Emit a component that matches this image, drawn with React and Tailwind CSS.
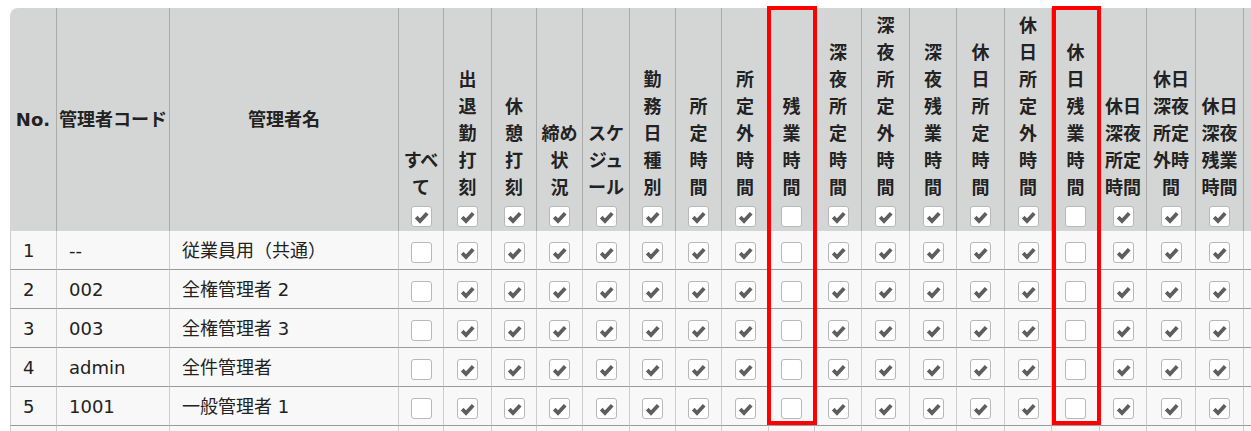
import React from 'react';

const columns = [
  { key: 'all', w: 'w-[45px]', lines: ['すべ', 'て'], head: true, body: false },
  { key: 'clock', w: 'w-[48px]', lines: ['出', '退', '勤', '打', '刻'], head: true, body: true },
  { key: 'break', w: 'w-[45px]', lines: ['休', '憩', '打', '刻'], head: true, body: true },
  { key: 'close', w: 'w-[46px]', lines: ['締め', '状', '況'], head: true, body: true },
  { key: 'sched', w: 'w-[47px]', lines: ['スケ', 'ジュ', 'ール'], head: true, body: true },
  { key: 'daytype', w: 'w-[46px]', lines: ['勤', '務', '日', '種', '別'], head: true, body: true },
  { key: 'reg', w: 'w-[46px]', lines: ['所', '定', '時', '間'], head: true, body: true },
  { key: 'nonreg', w: 'w-[47px]', lines: ['所', '定', '外', '時', '間'], head: true, body: true },
  { key: 'ot', w: 'w-[46px]', lines: ['残', '業', '時', '間'], head: false, body: false },
  { key: 'nreg', w: 'w-[47px]', lines: ['深', '夜', '所', '定', '時', '間'], head: true, body: true },
  { key: 'nnonreg', w: 'w-[48px]', lines: ['深', '夜', '所', '定', '外', '時', '間'], head: true, body: true },
  { key: 'not', w: 'w-[47px]', lines: ['深', '夜', '残', '業', '時', '間'], head: true, body: true },
  { key: 'hreg', w: 'w-[48px]', lines: ['休', '日', '所', '定', '時', '間'], head: true, body: true },
  { key: 'hnonreg', w: 'w-[47px]', lines: ['休', '日', '所', '定', '外', '時', '間'], head: true, body: true },
  { key: 'hot', w: 'w-[48px]', lines: ['休', '日', '残', '業', '時', '間'], head: false, body: false },
  { key: 'hnreg', w: 'w-[47px]', lines: ['休日', '深夜', '所定', '時間'], head: true, body: true },
  { key: 'hnnonreg', w: 'w-[49px]', lines: ['休日', '深夜', '所定', '外時', '間'], head: true, body: true },
  { key: 'hnot', w: 'w-[48px]', lines: ['休日', '深夜', '残業', '時間'], head: true, body: true },
  // next column is cut off by the viewport
  { key: 'extra', w: 'w-[60px]', lines: [], head: true, body: true },
];

const admins = [
  { no: 1, code: '--', name: '従業員用（共通）' },
  { no: 2, code: '002', name: '全権管理者 2' },
  { no: 3, code: '003', name: '全権管理者 3' },
  { no: 4, code: 'admin', name: '全件管理者' },
  { no: 5, code: '1001', name: '一般管理者 1' },
];

const CheckBox = ({ checked }) => (
  <div className="w-[21px] h-[21px] rounded-[3px] border border-[#b8b8b8] bg-white">
    {checked && (
      <svg width="19" height="19" viewBox="0 0 19 19" className="block">
        <path d="M4.2 10.2 L8 14 L15.2 6.3" fill="none" stroke="#5e5e5e" strokeWidth="3.8" />
      </svg>
    )}
  </div>
);

const App = () => {
  return (
    <div className="relative w-[1251px] h-[431px] overflow-hidden bg-white pt-2 pl-[10px] font-['DejaVu_Sans','Noto_Sans_CJK_JP',sans-serif] text-[18px] leading-[27px] text-[#222]">
      <table className="table-fixed border-separate border-spacing-0 w-[1294px]">
        <thead>
          <tr className="bg-[#d4d6d6]">
            <th className="w-[47px] rounded-tl-lg border-r border-[#ababab] align-middle font-bold">No.</th>
            <th className="w-[113px] border-r border-[#ababab] align-middle font-bold whitespace-nowrap">管理者コード</th>
            <th className="w-[229px] border-r border-[#ababab] align-middle font-bold">管理者名</th>
            {columns.map((c) => (
              <th key={c.key} className={`${c.w} border-r border-[#ababab] align-bottom pt-1 pb-1 font-bold`}>
                <div className="flex flex-col items-center">
                  {c.lines.map((l, i) => (
                    <div key={i} className="whitespace-nowrap">{l}</div>
                  ))}
                  <div className="mt-[5px]">
                    <CheckBox checked={c.head} />
                  </div>
                </div>
              </th>
            ))}
          </tr>
        </thead>
        <tbody>
          {admins.map((a) => (
            <tr key={a.no} className="bg-[#f8f8f8]">
              <td className="h-[39px] border-l border-r border-b border-l-[#cccccc] border-r-[#cccccc] border-b-[#9a9a9a] pl-3">{a.no}</td>
              <td className="h-[39px] border-r border-b border-r-[#cccccc] border-b-[#9a9a9a] pl-3">{a.code}</td>
              <td className="h-[39px] border-r border-b border-r-[#cccccc] border-b-[#9a9a9a] pl-3">{a.name}</td>
              {columns.map((c) => (
                <td key={c.key} className="h-[39px] border-r border-b border-r-[#cccccc] border-b-[#9a9a9a]">
                  <div className="flex justify-center pt-1">
                    <CheckBox checked={c.body} />
                  </div>
                </td>
              ))}
            </tr>
          ))}
          {/* next row, only its top edge is in view */}
          <tr className="bg-[#f8f8f8]">
            <td className="h-[39px] border-l border-r border-l-[#cccccc] border-r-[#cccccc]" />
            <td className="h-[39px] border-r border-r-[#cccccc]" />
            <td className="h-[39px] border-r border-r-[#cccccc]" />
            {columns.map((c) => (
              <td key={c.key} className="h-[39px] border-r border-r-[#cccccc]" />
            ))}
          </tr>
        </tbody>
      </table>

      {/* highlight frames */}
      <div className="absolute top-[6px] left-[767px] w-[50px] h-[419px] border-4 border-[#ff0000]" />
      <div className="absolute top-[6px] left-[1052px] w-[49px] h-[419px] border-4 border-[#ff0000]" />
    </div>
  );
};

export default App;
